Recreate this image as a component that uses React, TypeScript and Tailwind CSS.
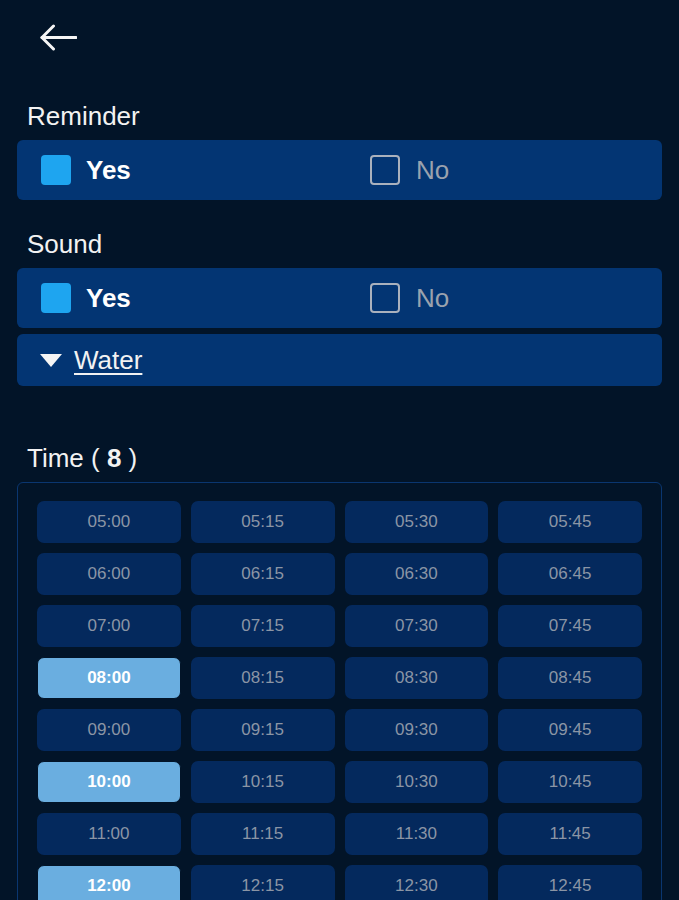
import React from "react";

const rows = ["05", "06", "07", "08", "09", "10", "11", "12"];
const mins = ["00", "15", "30", "45"];
const selected = new Set(["08:00", "10:00", "12:00"]);

function CheckRow() {
  return (
    <div className="mx-[17px] h-[60px] rounded-[6px] bg-[#033573] flex items-center pl-[24px]">
      <div className="w-[329px] flex items-center gap-[15px]">
        <div className="w-[30px] h-[30px] rounded-[4px] bg-[#1ea5f0]" />
        <span className="text-[26px] font-bold text-white leading-none">Yes</span>
      </div>
      <div className="flex items-center gap-[16px]">
        <div className="w-[30px] h-[30px] rounded-[4px] border-2 border-[#aab1bd]" />
        <span className="text-[26px] text-[#9aa2ae] leading-none">No</span>
      </div>
    </div>
  );
}

export default function App() {
  return (
    <div
      className="h-[900px] w-full bg-[#021428] text-[#f2f2f2] overflow-hidden"
      style={{ fontFamily: '"Liberation Sans", Arial, sans-serif' }}
    >
      <div className="h-[101px] pt-[24px] pl-[40px]">
        <svg width="37" height="27" viewBox="0 0 37 27" fill="none">
          <path d="M2 13.5H36" stroke="#f5f5f5" strokeWidth="3" strokeLinecap="round" />
          <path d="M13.5 2L2 13.5L13.5 25" stroke="#f5f5f5" strokeWidth="3" strokeLinecap="round" strokeLinejoin="round" />
        </svg>
      </div>

      <div className="h-[30px] px-[27px] text-[26px] leading-[30px]">Reminder</div>
      <div className="h-[9px]" />
      <CheckRow />

      <div className="h-[29px]" />
      <div className="h-[30px] px-[27px] text-[26px] leading-[30px]">Sound</div>
      <div className="h-[9px]" />
      <CheckRow />

      <div className="h-[6px]" />
      <div className="mx-[17px] h-[52px] rounded-[6px] bg-[#033573] flex items-center pl-[23px] gap-[12px]">
        <svg width="22" height="13" viewBox="0 0 22 13">
          <path d="M0 0H22L11 13Z" fill="#f5f5f5" />
        </svg>
        <span className="text-[26px] leading-none underline underline-offset-[4px] decoration-[2px] text-[#f2f2f2]">
          Water
        </span>
      </div>

      <div className="h-[57px]" />
      <div className="h-[30px] px-[27px] text-[26px] leading-[30px]">
        Time ( <span className="font-bold">8</span> )
      </div>
      <div className="h-[9px]" />

      <div className="mx-[17px] border border-[#0a3670] rounded-[6px] pt-[18px] pb-[18px] px-[19px] grid grid-cols-4 gap-[10px]">
        {rows.flatMap((h) =>
          mins.map((m) => {
            const t = `${h}:${m}`;
            const on = selected.has(t);
            return (
              <div
                key={t}
                className={
                  on
                    ? "h-[42px] rounded-[7px] bg-[#6aaee0] border border-[#021428] flex items-center justify-center text-[17px] font-bold text-white"
                    : "h-[42px] rounded-[7px] bg-[#04295d] flex items-center justify-center text-[17px] text-[#8b95a5]"
                }
              >
                {t}
              </div>
            );
          })
        )}
      </div>
    </div>
  );
}
